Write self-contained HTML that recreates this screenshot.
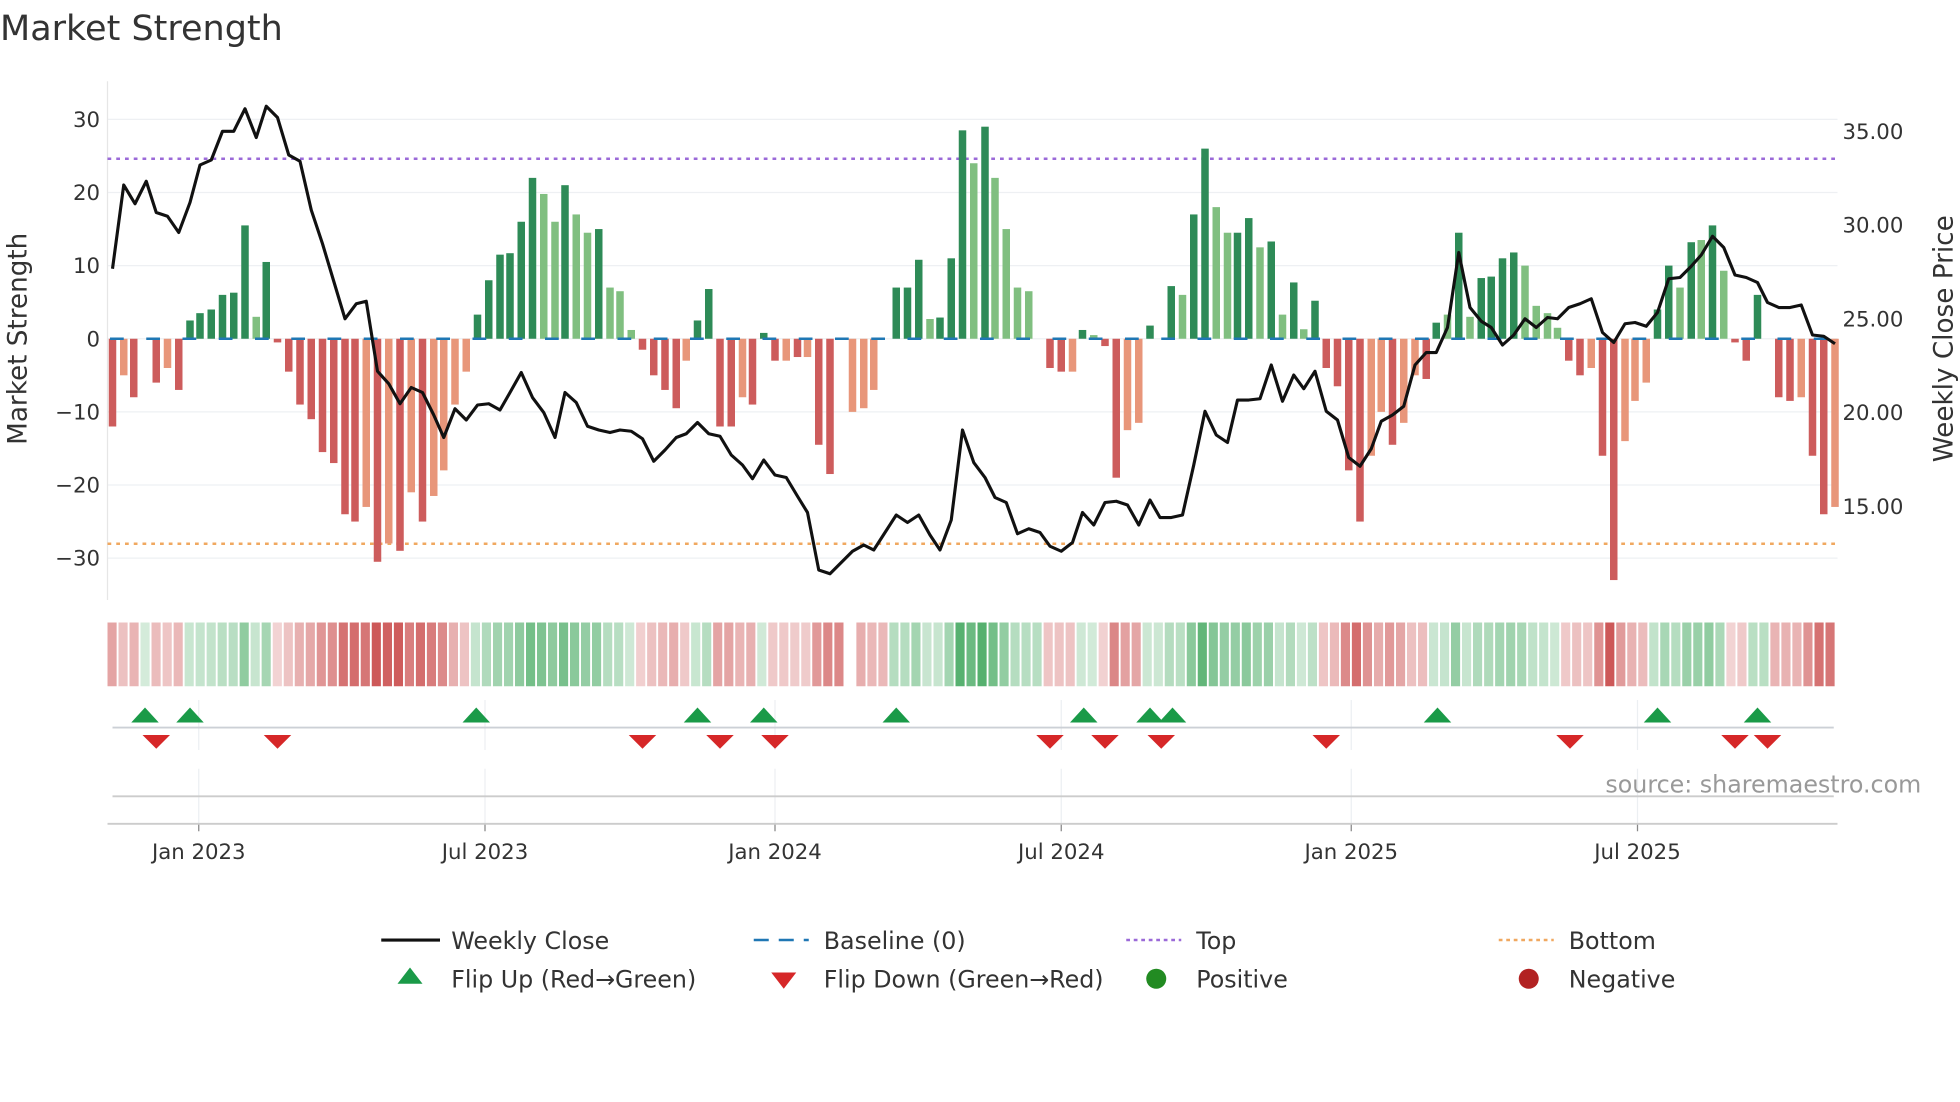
<!DOCTYPE html>
<html><head><meta charset="utf-8"><style>html,body{margin:0;padding:0;background:#fff;overflow:hidden}svg{display:block}</style></head>
<body>
<svg id="s" width="1960" height="1102" viewBox="0 0 1568 881.6" xmlns="http://www.w3.org/2000/svg" font-family="DejaVu Sans, Liberation Sans, sans-serif">
<text x="0" y="32" font-size="28" fill="#333">Market Strength</text>
<g id="g"></g>
</svg>
<script>
var g=document.getElementById('g'),h='';
function Y(v){return 271-v*5.85}
function P(p){return 255-(p-25)*15}
// grid
[30,20,10,0,-10,-20,-30].forEach(function(v){var y=Y(v);h+='<line x1="86" x2="1470" y1="'+y+'" y2="'+y+'" stroke="#eef0f3" stroke-width="1"/>';h+='<text x="80" y="'+(y+6)+'" font-size="17" fill="#333" text-anchor="end">'+(v<0?'\u2212'+(-v):v)+'</text>';});
[35,30,25,20,15].forEach(function(p){h+='<text x="1474" y="'+(P(p)+6)+'" font-size="17" fill="#333">'+p.toFixed(2)+'</text>';});
h+='<line x1="86" x2="86" y1="65" y2="480" stroke="#e6e6e6"/>';
h+='<text transform="translate(21,271) rotate(-90)" font-size="21" fill="#333" text-anchor="middle">Market Strength</text>';
h+='<text transform="translate(1562,271) rotate(-90)" font-size="21" fill="#333" text-anchor="middle">Weekly Close Price</text>';
h+='<line x1="86" x2="1470" y1="127" y2="127" stroke="#9b6ad8" stroke-width="2" stroke-dasharray="3,4"/>';
h+='<line x1="86" x2="1470" y1="435" y2="435" stroke="#f0a860" stroke-width="2" stroke-dasharray="3,4"/>';
var B=[[90,-12,0],[99,-5,1],[107,-8,0],[116,0,0],[125,-6,0],[134,-4,1],[143,-7,0],[152,2.5,0],[160,3.5,0],[169,4,0],[178,6,0],[187,6.3,0],[196,15.5,0],[205,3,1],[213,10.5,0],[222,-0.5,0],[231,-4.5,0],[240,-9,0],[249,-11,0],[258,-15.5,0],[267,-17,0],[276,-24,0],[284,-25,0],[293,-23,1],[302,-30.5,0],[311,-28,1],[320,-29,0],[329,-21,1],[338,-25,0],[347,-21.5,1],[355,-18,1],[364,-9,1],[373,-4.5,1],[382,3.3,0],[391,8,0],[400,11.5,0],[408,11.7,0],[417,16,0],[426,22,0],[435,19.8,1],[444,16,1],[452,21,0],[461,17,1],[470,14.5,1],[479,15,0],[488,7,1],[496,6.5,1],[505,1.2,1],[514,-1.5,0],[523,-5,0],[532,-7,0],[541,-9.5,0],[549,-3,1],[558,2.5,0],[567,6.8,0],[576,-12,0],[585,-12,0],[594,-8,1],[602,-9,0],[611,0.8,0],[620,-3,0],[629,-3,1],[638,-2.5,0],[646,-2.5,1],[655,-14.5,0],[664,-18.5,0],[682,-10,1],[691,-9.5,1],[699,-7,1],[717,7,0],[726,7,0],[735,10.8,0],[744,2.7,1],[752,2.9,0],[761,11,0],[770,28.5,0],[779,24,1],[788,29,0],[796,22,1],[805,15,1],[814,7,1],[823,6.5,1],[840,-4,0],[849,-4.5,0],[858,-4.5,1],[866,1.2,0],[875,0.5,1],[884,-1,0],[893,-19,0],[902,-12.5,1],[911,-11.5,1],[920,1.8,0],[937,7.2,0],[946,6,1],[955,17,0],[964,26,0],[973,18,1],[982,14.5,1],[990,14.5,0],[999,16.5,0],[1008,12.5,1],[1017,13.3,0],[1026,3.3,1],[1035,7.7,0],[1043,1.3,1],[1052,5.2,0],[1061,-4,0],[1070,-6.5,0],[1079,-18,0],[1088,-25,0],[1097,-16,1],[1105,-10,1],[1114,-14.5,0],[1123,-11.5,1],[1132,-5,1],[1141,-5.5,0],[1149,2.2,0],[1158,3.3,1],[1167,14.5,0],[1176,3,1],[1185,8.3,0],[1193,8.5,0],[1202,11,0],[1211,11.8,0],[1220,10,1],[1229,4.5,1],[1238,3.5,1],[1246,1.5,1],[1255,-3,0],[1264,-5,0],[1273,-4,1],[1282,-16,0],[1291,-33,0],[1300,-14,1],[1308,-8.5,1],[1317,-6,1],[1326,4,0],[1335,10,0],[1344,7,1],[1353,13.2,0],[1361,13.5,1],[1370,15.5,0],[1379,9.3,1],[1388,-0.5,0],[1397,-3,0],[1406,6,0],[1423,-8,0],[1432,-8.5,0],[1441,-8,1],[1450,-16,0],[1459,-24,0],[1468,-23,1]];
B.forEach(function(b){var v=b[1],c=v>=0?(b[2]?'#80bf80':'#2e8b57'):(b[2]?'#e8967a':'#cd5c5c');var y0=Y(Math.max(v,0)),hh=Math.abs(v)*5.85;h+='<rect x="'+(b[0]-3)+'" y="'+y0+'" width="6" height="'+hh+'" fill="'+c+'"/>';});
h+='<line x1="88" x2="1470" y1="271" y2="271" stroke="#1f77b4" stroke-width="2" stroke-dasharray="11,18"/>';
// strip
for(var i=0;i<157;i++){var x=86+8.81*i;if(x>668&&x<677)continue;var cx=x+4.4,best=B[0];B.forEach(function(b){if(Math.abs(b[0]-cx)<Math.abs(best[0]-cx))best=b});var v=best[1],a=Math.min(0.25+Math.abs(v)/30*0.75,1);var col=v>=0?'rgba(50,160,80,'+(a*0.85)+')':'rgba(200,70,70,'+(a*0.9)+')';h+='<rect x="'+x.toFixed(1)+'" y="498" width="7.3" height="51" fill="'+col+'"/>';}
// ticks
var T=[[159,'Jan 2023'],[388,'Jul 2023'],[620,'Jan 2024'],[849,'Jul 2024'],[1081,'Jan 2025'],[1310,'Jul 2025']];
T.forEach(function(t){h+='<line x1="'+t[0]+'" x2="'+t[0]+'" y1="560" y2="600" stroke="#eceff2"/><line x1="'+t[0]+'" x2="'+t[0]+'" y1="615" y2="665" stroke="#eceff2"/><line x1="'+t[0]+'" x2="'+t[0]+'" y1="659" y2="665" stroke="#888"/><text x="'+t[0]+'" y="687" font-size="17" fill="#333" text-anchor="middle">'+t[1]+'</text>';});
h+='<line x1="90" x2="1467" y1="582" y2="582" stroke="#ccd0d6" stroke-width="1.5"/>';
h+='<line x1="90" x2="1467" y1="637" y2="637" stroke="#ccc" stroke-width="1.5"/>';
h+='<line x1="86" x2="1470" y1="659" y2="659" stroke="#ccc" stroke-width="1.5"/>';
[116,152,381,558,611,717,867,920,938,1150,1326,1406].forEach(function(x){h+='<polygon points="'+(x-11)+',578 '+(x+11)+',578 '+x+',566" fill="#1a9a48"/>'});
[125,222,514,576,620,840,884,929,1061,1256,1388,1414].forEach(function(x){h+='<polygon points="'+(x-11)+',588 '+(x+11)+',588 '+x+',599" fill="#d62728"/>'});
h+='<text x="1537" y="634" font-size="19" fill="#999" text-anchor="end">source: sharemaestro.com</text>';
// price
var L=[90,215,99,148,108,163,117,145,125,170,134,173,143,186,152,162,160,132,169,128,178,105,187,105,196,87,205,110,213,85,222,94,231,124,240,129,249,168,258,195,267,225,276,255,285,243,293,241,302,297,311,307,320,323,329,310,338,314,347,332,355,350,364,327,373,336,382,324,391,323,400,328,408,314,417,298,426,318,435,330,444,350,452,314,461,322,470,341,479,344,488,346,496,344,505,345,514,351,523,369,532,360,541,350,549,347,558,338,567,347,576,349,585,364,594,372,602,383,611,368,620,380,629,382,638,397,646,410,655,456,664,459,673,450,682,441,691,436,699,440,708,426,717,412,726,418,735,412,744,428,752,440,761,416,770,344,779,370,788,382,796,398,805,402,814,427,823,423,832,426,840,437,849,441,858,434,866,410,875,420,884,402,893,401,902,404,911,420,920,400,928,414,937,414,946,412,955,372,964,329,973,348,982,354,990,320,999,320,1008,319,1017,292,1026,321,1035,300,1043,311,1052,297,1061,329,1070,336,1079,366,1088,373,1097,359,1105,337,1114,332,1123,325,1132,292,1141,282,1149,282,1158,262,1167,202,1176,246,1185,257,1193,262,1202,276,1211,268,1220,255,1229,262,1238,254,1246,255,1255,246,1264,243,1273,239,1282,266,1291,274,1300,259,1308,258,1317,261,1326,250,1335,223,1344,222,1353,213,1361,204,1370,189,1379,198,1388,220,1397,222,1406,226,1414,242,1423,246,1432,246,1441,244,1450,268,1459,269,1468,275];
var pts='';for(var k=0;k<L.length;k+=2)pts+=L[k]+','+L[k+1]+' ';
h+='<polyline points="'+pts+'" fill="none" stroke="#111" stroke-width="2.5" stroke-linejoin="round"/>';
// legend
function tx(x,y,s){return '<text x="'+x+'" y="'+y+'" font-size="19" fill="#333">'+s+'</text>'}
h+='<line x1="305" x2="352" y1="752" y2="752" stroke="#111" stroke-width="2.5"/>'+tx(361,759,'Weekly Close');
h+='<line x1="603" x2="647" y1="752" y2="752" stroke="#1f77b4" stroke-width="2" stroke-dasharray="12,8"/>'+tx(659,759,'Baseline (0)');
h+='<line x1="901" x2="945" y1="752" y2="752" stroke="#9b6ad8" stroke-width="2" stroke-dasharray="3,3"/>'+tx(957,759,'Top');
h+='<line x1="1199" x2="1243" y1="752" y2="752" stroke="#f0a860" stroke-width="2" stroke-dasharray="3,3"/>'+tx(1255,759,'Bottom');
h+='<polygon points="318,787 338,787 328,774" fill="#1a9a48"/>'+tx(361,790,'Flip Up (Red\u2192Green)');
h+='<polygon points="617,778 637,778 627,791" fill="#d62728"/>'+tx(659,790,'Flip Down (Green\u2192Red)');
h+='<circle cx="925" cy="783" r="8" fill="#228b22"/>'+tx(957,790,'Positive');
h+='<circle cx="1223" cy="783" r="8" fill="#b22222"/>'+tx(1255,790,'Negative');
g.innerHTML=h;
</script>
</body></html>
